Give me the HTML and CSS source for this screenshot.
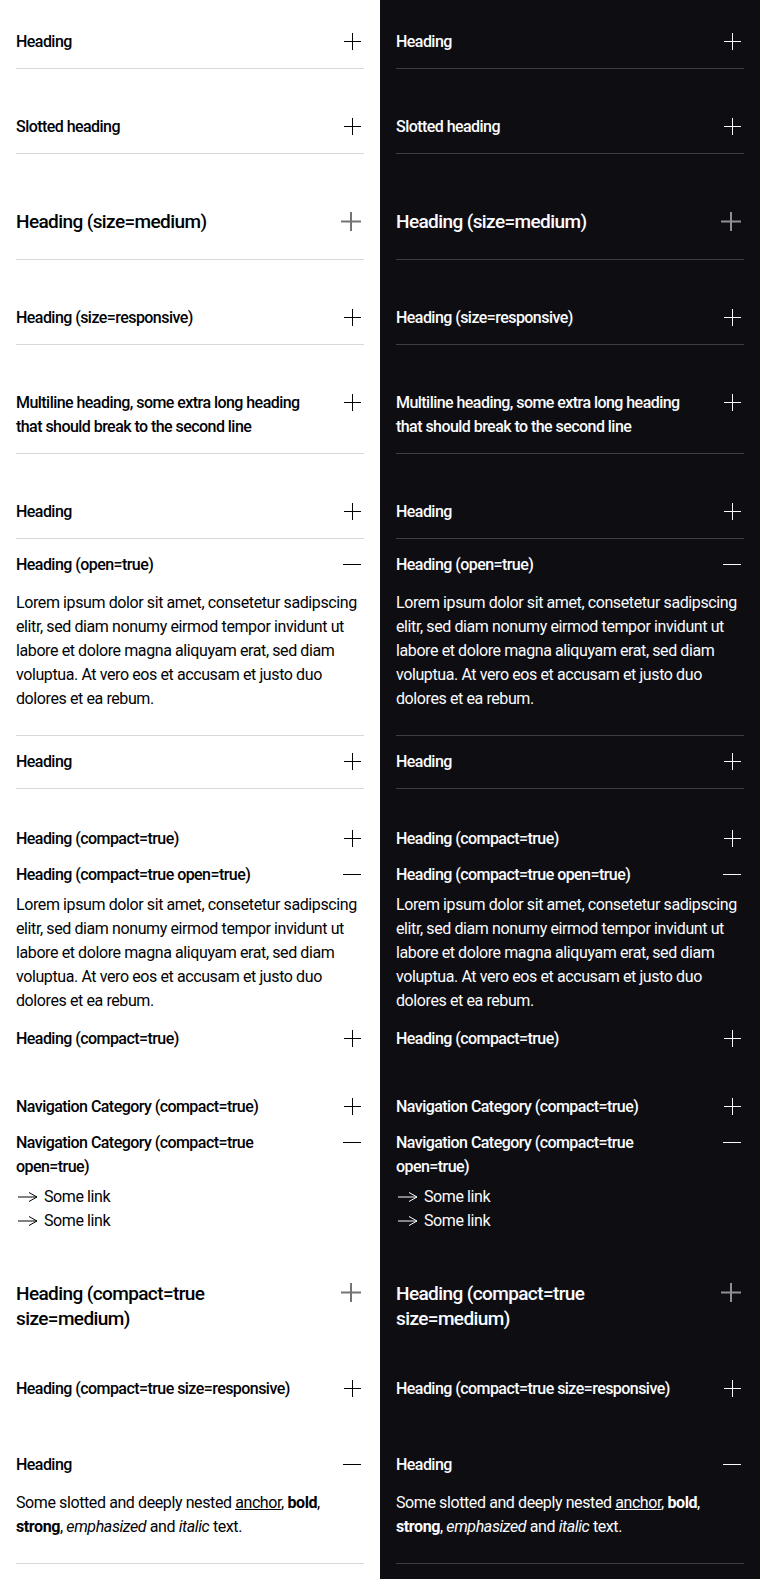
FILE: index.html
```html
<!DOCTYPE html>
<html lang="en">
<head>
<meta charset="utf-8">
<title>Accordion</title>
<link rel="stylesheet" href="styles.css">
</head>
<body>
<div class="page">
  <section class="col light">
    <div class="acc"><div class="head"><span class="title">Heading</span><svg class="icon" viewBox="0 0 24 24"><path d="M4 11.5h17M12.5 3v17"/></svg></div></div>
    <div class="acc"><div class="head"><span class="title">Slotted heading</span><svg class="icon" viewBox="0 0 24 24"><path d="M4 11.5h17M12.5 3v17"/></svg></div></div>
    <div class="acc medium"><div class="head"><span class="title">Heading (size=medium)</span><svg class="icon" viewBox="0 0 28 28"><path d="M5 13.5h20M15 4v19"/></svg></div></div>
    <div class="acc"><div class="head"><span class="title">Heading (size=responsive)</span><svg class="icon" viewBox="0 0 24 24"><path d="M4 11.5h17M12.5 3v17"/></svg></div></div>
    <div class="acc"><div class="head"><span class="title">Multiline heading, some extra long heading that should break to the second line</span><svg class="icon" viewBox="0 0 24 24"><path d="M4 11.5h17M12.5 3v17"/></svg></div></div>
    <div class="group">
      <div class="acc"><div class="head"><span class="title">Heading</span><svg class="icon" viewBox="0 0 24 24"><path d="M4 11.5h17M12.5 3v17"/></svg></div></div>
      <div class="acc"><div class="head"><span class="title">Heading (open=true)</span><svg class="icon" viewBox="0 0 24 24"><path d="M3 11.5h18"/></svg></div>
        <div class="body">Lorem ipsum dolor sit amet, consetetur sadipscing elitr, sed diam nonumy eirmod tempor invidunt ut labore et dolore magna aliquyam erat, sed diam voluptua. At vero eos et accusam et justo duo dolores et ea rebum.</div></div>
      <div class="acc"><div class="head"><span class="title">Heading</span><svg class="icon" viewBox="0 0 24 24"><path d="M4 11.5h17M12.5 3v17"/></svg></div></div>
    </div>
    <div class="group">
      <div class="acc compact"><div class="head"><span class="title">Heading (compact=true)</span><svg class="icon" viewBox="0 0 24 24"><path d="M4 11.5h17M12.5 3v17"/></svg></div></div>
      <div class="acc compact"><div class="head"><span class="title">Heading (compact=true open=true)</span><svg class="icon" viewBox="0 0 24 24"><path d="M3 11.5h18"/></svg></div>
        <div class="body">Lorem ipsum dolor sit amet, consetetur sadipscing elitr, sed diam nonumy eirmod tempor invidunt ut labore et dolore magna aliquyam erat, sed diam voluptua. At vero eos et accusam et justo duo dolores et ea rebum.</div></div>
      <div class="acc compact"><div class="head"><span class="title">Heading (compact=true)</span><svg class="icon" viewBox="0 0 24 24"><path d="M4 11.5h17M12.5 3v17"/></svg></div></div>
    </div>
    <div class="group">
      <div class="acc compact"><div class="head"><span class="title">Navigation Category (compact=true)</span><svg class="icon" viewBox="0 0 24 24"><path d="M4 11.5h17M12.5 3v17"/></svg></div></div>
      <div class="acc compact"><div class="head"><span class="title">Navigation Category (compact=true open=true)</span><svg class="icon" viewBox="0 0 24 24"><path d="M3 11.5h18"/></svg></div>
        <div class="body links">
          <a class="link" href="#"><svg class="arrow" viewBox="0 0 24 24"><path d="M2 12h19M13 7.5l8 4.5-8 4.5"/></svg><span>Some link</span></a>
          <a class="link" href="#"><svg class="arrow" viewBox="0 0 24 24"><path d="M2 12h19M13 7.5l8 4.5-8 4.5"/></svg><span>Some link</span></a>
        </div></div>
    </div>
    <div class="acc compact medium"><div class="head"><span class="title">Heading (compact=true size=medium)</span><svg class="icon" viewBox="0 0 28 28"><path d="M5 13.5h20M15 4v19"/></svg></div></div>
    <div class="acc compact"><div class="head"><span class="title">Heading (compact=true size=responsive)</span><svg class="icon" viewBox="0 0 24 24"><path d="M4 11.5h17M12.5 3v17"/></svg></div></div>
    <div class="acc"><div class="head"><span class="title">Heading</span><svg class="icon" viewBox="0 0 24 24"><path d="M3 11.5h18"/></svg></div>
      <div class="body">Some slotted and deeply nested <a href="#">anchor</a>, <b>bold</b>, <strong>strong</strong>, <em>emphasized</em> and <i>italic</i> text.</div></div>
  </section>

  <section class="col dark">
    <div class="acc"><div class="head"><span class="title">Heading</span><svg class="icon" viewBox="0 0 24 24"><path d="M4 11.5h17M12.5 3v17"/></svg></div></div>
    <div class="acc"><div class="head"><span class="title">Slotted heading</span><svg class="icon" viewBox="0 0 24 24"><path d="M4 11.5h17M12.5 3v17"/></svg></div></div>
    <div class="acc medium"><div class="head"><span class="title">Heading (size=medium)</span><svg class="icon" viewBox="0 0 28 28"><path d="M5 13.5h20M15 4v19"/></svg></div></div>
    <div class="acc"><div class="head"><span class="title">Heading (size=responsive)</span><svg class="icon" viewBox="0 0 24 24"><path d="M4 11.5h17M12.5 3v17"/></svg></div></div>
    <div class="acc"><div class="head"><span class="title">Multiline heading, some extra long heading that should break to the second line</span><svg class="icon" viewBox="0 0 24 24"><path d="M4 11.5h17M12.5 3v17"/></svg></div></div>
    <div class="group">
      <div class="acc"><div class="head"><span class="title">Heading</span><svg class="icon" viewBox="0 0 24 24"><path d="M4 11.5h17M12.5 3v17"/></svg></div></div>
      <div class="acc"><div class="head"><span class="title">Heading (open=true)</span><svg class="icon" viewBox="0 0 24 24"><path d="M3 11.5h18"/></svg></div>
        <div class="body">Lorem ipsum dolor sit amet, consetetur sadipscing elitr, sed diam nonumy eirmod tempor invidunt ut labore et dolore magna aliquyam erat, sed diam voluptua. At vero eos et accusam et justo duo dolores et ea rebum.</div></div>
      <div class="acc"><div class="head"><span class="title">Heading</span><svg class="icon" viewBox="0 0 24 24"><path d="M4 11.5h17M12.5 3v17"/></svg></div></div>
    </div>
    <div class="group">
      <div class="acc compact"><div class="head"><span class="title">Heading (compact=true)</span><svg class="icon" viewBox="0 0 24 24"><path d="M4 11.5h17M12.5 3v17"/></svg></div></div>
      <div class="acc compact"><div class="head"><span class="title">Heading (compact=true open=true)</span><svg class="icon" viewBox="0 0 24 24"><path d="M3 11.5h18"/></svg></div>
        <div class="body">Lorem ipsum dolor sit amet, consetetur sadipscing elitr, sed diam nonumy eirmod tempor invidunt ut labore et dolore magna aliquyam erat, sed diam voluptua. At vero eos et accusam et justo duo dolores et ea rebum.</div></div>
      <div class="acc compact"><div class="head"><span class="title">Heading (compact=true)</span><svg class="icon" viewBox="0 0 24 24"><path d="M4 11.5h17M12.5 3v17"/></svg></div></div>
    </div>
    <div class="group">
      <div class="acc compact"><div class="head"><span class="title">Navigation Category (compact=true)</span><svg class="icon" viewBox="0 0 24 24"><path d="M4 11.5h17M12.5 3v17"/></svg></div></div>
      <div class="acc compact"><div class="head"><span class="title">Navigation Category (compact=true open=true)</span><svg class="icon" viewBox="0 0 24 24"><path d="M3 11.5h18"/></svg></div>
        <div class="body links">
          <a class="link" href="#"><svg class="arrow" viewBox="0 0 24 24"><path d="M2 12h19M13 7.5l8 4.5-8 4.5"/></svg><span>Some link</span></a>
          <a class="link" href="#"><svg class="arrow" viewBox="0 0 24 24"><path d="M2 12h19M13 7.5l8 4.5-8 4.5"/></svg><span>Some link</span></a>
        </div></div>
    </div>
    <div class="acc compact medium"><div class="head"><span class="title">Heading (compact=true size=medium)</span><svg class="icon" viewBox="0 0 28 28"><path d="M5 13.5h20M15 4v19"/></svg></div></div>
    <div class="acc compact"><div class="head"><span class="title">Heading (compact=true size=responsive)</span><svg class="icon" viewBox="0 0 24 24"><path d="M4 11.5h17M12.5 3v17"/></svg></div></div>
    <div class="acc"><div class="head"><span class="title">Heading</span><svg class="icon" viewBox="0 0 24 24"><path d="M3 11.5h18"/></svg></div>
      <div class="body">Some slotted and deeply nested <a href="#">anchor</a>, <b>bold</b>, <strong>strong</strong>, <em>emphasized</em> and <i>italic</i> text.</div></div>
  </section>
</div>
</body>
</html>
```

FILE: styles.css
```css
html, body {
  margin: 0;
  padding: 0;
}

body {
  font-family: Roboto, "Liberation Sans", Arial, sans-serif;
  -webkit-font-smoothing: antialiased;
}

.page {
  display: grid;
  grid-template-columns: 380px 380px;
  min-height: 100vh;
}

.col {
  padding: 16px;
  display: flex;
  flex-direction: column;
  gap: 32px;
}

.light {
  background: #ffffff;
  color: #010205;
  --line: #d8d8db;
}

.dark {
  background: #0e0e12;
  color: #fbfcff;
  --line: #3e3e42;
}

.group {
  display: flex;
  flex-direction: column;
}

.acc {
  border-bottom: 1px solid var(--line);
}

.acc.compact {
  border-bottom: none;
}

.head {
  display: flex;
  align-items: flex-start;
  gap: 16px;
  padding: 14px 0;
}

.title {
  flex: 1;
  font-size: 16px;
  line-height: 24px;
  font-weight: 500;
  letter-spacing: -0.55px;
}

.icon {
  flex: none;
  width: 24px;
  height: 24px;
  fill: none;
  stroke: currentColor;
  stroke-width: 1;
}

.compact .head {
  padding: 6px 0;
}

.medium .head {
  padding: 23px 0;
}

.compact.medium .head {
  padding: 8px 0;
}

.medium .title {
  font-size: 19px;
  line-height: 25px;
  letter-spacing: -0.6px;
}

.medium .icon {
  width: 28px;
  height: 28px;
  margin-top: -1.5px;
  stroke-width: 2;
  stroke-opacity: 0.55;
}

.body {
  font-size: 16px;
  line-height: 24px;
  letter-spacing: -0.4px;
  padding-bottom: 24px;
}

.compact .body {
  padding-bottom: 8px;
}

.body a {
  color: inherit;
  text-decoration: underline;
}

.body b,
.body strong {
  font-weight: 700;
}

.links {
  display: flex;
  flex-direction: column;
}

.link {
  display: flex;
  align-items: center;
  gap: 4px;
  color: inherit;
  text-decoration: none;
}

.body .link {
  text-decoration: none;
}

.arrow {
  flex: none;
  width: 24px;
  height: 24px;
  fill: none;
  stroke: currentColor;
  stroke-width: 1;
}
```
